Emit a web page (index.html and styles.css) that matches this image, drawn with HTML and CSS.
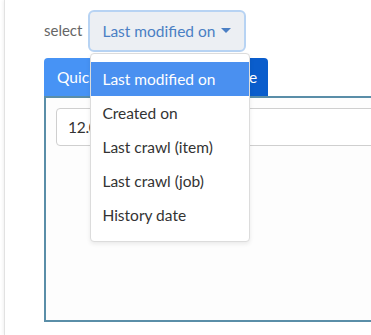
FILE: index.html
```html
<!DOCTYPE html>
<html lang="en">
<head>
  <meta charset="UTF-8">
  <meta name="viewport" content="width=device-width, initial-scale=1.0">
  <title>Date filter</title>
  <link rel="stylesheet" href="styles.css">
</head>
<body>
  <div class="card">
    <!-- Date field selector -->
    <div class="field-row">
      <span class="field-label">select</span>
      <div class="dropdown">
        <button class="dropdown-toggle">Last modified on <span class="caret"></span></button>
        <div class="dropdown-menu">
          <div class="dropdown-item active">Last modified on</div>
          <div class="dropdown-item">Created on</div>
          <div class="dropdown-item">Last crawl (item)</div>
          <div class="dropdown-item">Last crawl (job)</div>
          <div class="dropdown-item">History date</div>
        </div>
      </div>
    </div>

    <!-- Range tabs -->
    <div class="tabs">
      <div class="tab">Quick select</div>
      <div class="tab selected">Absolute date</div>
    </div>
    <div class="tab-panel">
      <input class="date-input" type="text" value="12.06.2019 00:00">
    </div>
  </div>
</body>
</html>
```

FILE: styles.css
```css
:root {
  --tab-color: #4793f5;
  --tab-selected: #0a5dcc;
  --panel-border: #5a8ea8;
  --text-color: #333333;
  --text-secondary: #666666;
}

* {
  margin: 0;
  padding: 0;
  box-sizing: border-box;
  font-family: Lato, 'Noto Sans', sans-serif;
}

body {
  background-color: #ffffff;
  overflow: hidden;
}

.card {
  margin-left: 4px;
  width: 520px;
  height: 335px;
  border-left: 1px solid #e2e2e2;
  box-shadow: -1px 0 3px rgba(0, 0, 0, 0.06);
  padding: 10px 0 0 39px;
}

.field-row {
  display: flex;
  align-items: center;
  gap: 6px;
}

.field-label {
  color: var(--text-secondary);
  font-size: 15px;
  margin-top: -3px;
}

.dropdown {
  position: relative;
}

.dropdown-toggle {
  display: flex;
  align-items: center;
  gap: 6px;
  height: 42px;
  padding: 0 13px 0 12px;
  background-color: #eceff3;
  border: 2px solid #b7d3f3;
  border-radius: 6px;
  color: #4a7fc4;
  font-size: 15.5px;
}

.caret {
  width: 0;
  height: 0;
  border-left: 5px solid transparent;
  border-right: 5px solid transparent;
  border-top: 5px solid #4a7fc4;
  margin-top: -2px;
}

.dropdown-menu {
  position: absolute;
  top: 43px;
  left: 2px;
  width: 160px;
  padding: 8px 0 9px;
  background-color: #ffffff;
  border: 1px solid #dcdcdc;
  border-radius: 4px;
  box-shadow: 0 2px 4px rgba(0, 0, 0, 0.08);
  z-index: 2;
}

.dropdown-item {
  height: 34px;
  line-height: 34px;
  padding-left: 11px;
  font-size: 15.5px;
  color: var(--text-color);
  white-space: nowrap;
}

.dropdown-item.active {
  background-color: #4a90f0;
  color: #ffffff;
}

.tabs {
  display: flex;
  margin-top: 6px;
}

.tab {
  height: 38px;
  line-height: 38px;
  padding: 0 10px 0 13px;
  background-color: var(--tab-color);
  color: #ffffff;
  font-size: 15.5px;
  border-radius: 4px 4px 0 0;
}

.tab.selected {
  padding: 0 11px 0 12px;
  background-color: var(--tab-selected);
}

.tab-panel {
  height: 226px;
  border: 2px solid var(--panel-border);
  border-right: none;
  padding: 10px 0 0 10px;
  background-color: #fdfdfd;
}

.date-input {
  width: 400px;
  height: 38px;
  padding: 0 11px;
  border: 1px solid #cfcfcf;
  border-radius: 4px;
  font-size: 15.5px;
  letter-spacing: -0.3px;
  color: var(--text-color);
  background-color: #ffffff;
}
```
